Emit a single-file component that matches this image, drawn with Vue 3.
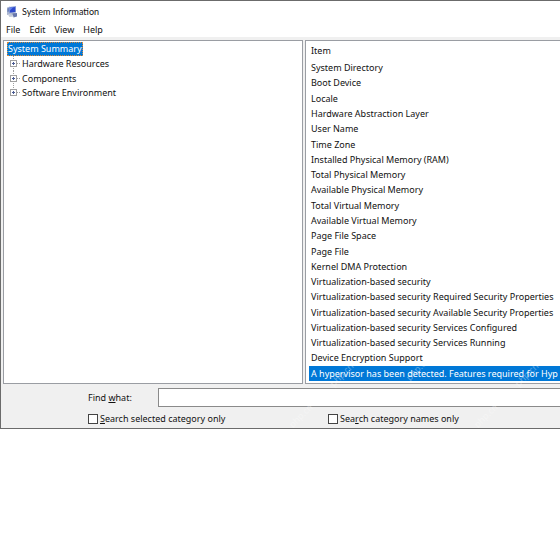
<script setup>
import { ref } from 'vue'

const menus = ['File', 'Edit', 'View', 'Help']
const categories = ['Hardware Resources', 'Components', 'Software Environment']
const items = [
  'System Directory',
  'Boot Device',
  'Locale',
  'Hardware Abstraction Layer',
  'User Name',
  'Time Zone',
  'Installed Physical Memory (RAM)',
  'Total Physical Memory',
  'Available Physical Memory',
  'Total Virtual Memory',
  'Available Virtual Memory',
  'Page File Space',
  'Page File',
  'Kernel DMA Protection',
  'Virtualization-based security',
  'Virtualization-based security Required Security Properties',
  'Virtualization-based security Available Security Properties',
  'Virtualization-based security Services Configured',
  'Virtualization-based security Services Running',
  'Device Encryption Support',
  'A hypervisor has been detected. Features required for Hyp',
]
const selected = ref(items.length - 1)
const query = ref('')
const marks = [
  { left: 326, top: 366 },
  { left: 402, top: 360 },
  { left: 511, top: 366 },
  { left: 285, top: 407 },
  { left: 470, top: 407 },
]
</script>

<template>
  <main class="window">
    <header class="titlebar">
      <svg class="app-icon" viewBox="0 0 12 12" aria-hidden="true">
        <path d="M1 1.5l3-1v8l-3 .5z" fill="#aab6d2" />
        <path d="M1.4 2.4l1.6-.5v3.6l-1.6.4z" fill="#6d82b8" />
        <path d="M3 1l7-1v6.5L3 7.3z" fill="#8fa3d8" />
        <path d="M3.8 1.7l5.4-.8v5L3.8 6.5z" fill="#2f49cc" />
        <path d="M3.8 1.7l3.4-.5-3.4 3.6z" fill="#6484ec" />
        <path d="M3 7.3l6-.6 1.6 2.1-5.6.7z" fill="#a9b3c9" />
        <path d="M6.5 7.4l4.5-.3v3.4l-3.5.9z" fill="#6878ad" />
        <path d="M2 8.6l4-.4 1.4 2.2-4 .5z" fill="#c3cad9" />
      </svg>
      <h1>System Information</h1>
    </header>
    <nav class="menubar">
      <button v-for="m in menus" :key="m" type="button">{{ m }}</button>
    </nav>

    <div class="panes">
      <section class="tree" aria-label="Categories">
        <button class="root" type="button">System Summary</button>
        <ul>
          <li v-for="(c, i) in categories" :key="c">
            <button class="node" type="button">
              <svg viewBox="0 0 13 15" aria-hidden="true">
                <path
                  :d="i === categories.length - 1 ? 'M4.5 0v8M8 7.5h4' : 'M4.5 0v15M8 7.5h4'"
                  stroke="#a0a0a0"
                  stroke-dasharray="1 1"
                  fill="none"
                />
                <rect x="1.5" y="4.5" width="6" height="6" fill="#fff" stroke="#a0a0a0" />
                <path d="M3 7.5h3M4.5 6v3" stroke="#4b5c94" fill="none" />
              </svg>
              <span>{{ c }}</span>
            </button>
          </li>
        </ul>
      </section>

      <section class="details">
        <table>
          <thead>
            <tr><th scope="col">Item</th></tr>
          </thead>
          <tbody>
            <tr v-for="(item, i) in items" :key="item" :class="{ selected: i === selected }" @click="selected = i">
              <td>{{ item }}</td>
            </tr>
          </tbody>
        </table>
      </section>
    </div>

    <form class="search" @submit.prevent>
      <label class="find" for="find">Find <u>w</u>hat:</label>
      <input id="find" v-model="query" class="query" type="text" />
      <div class="options">
        <label><input type="checkbox" /><span><u>S</u>earch selected category only</span></label>
        <label><input type="checkbox" /><span>Sea<u>r</u>ch category names only</span></label>
      </div>
    </form>

    <div class="marks" aria-hidden="true">
      <span v-for="m in marks" :key="m.left" :style="{ left: m.left + 'px', top: m.top + 'px' }">php.cn</span>
    </div>
  </main>
</template>

<style>
body {
  margin: 0;
  background: #fff;
}
</style>

<style scoped>
.window {
  position: relative;
  overflow: hidden;
  box-sizing: border-box;
  border: 1px solid #6b6b6b;
  border-right: 0;
  background: #f0f0f0;
  color: #111;
  font: 9px/15px "Noto Sans", "Open Sans", sans-serif;
}
button {
  margin: 0;
  padding: 0;
  border: 0;
  background: none;
  color: inherit;
  font: inherit;
}
.titlebar {
  display: flex;
  align-items: center;
  gap: 4px;
  height: 21px;
  padding-left: 5px;
  background: #fff;
}
.app-icon {
  width: 12px;
  height: 12px;
}
h1 {
  margin: 0;
  font: 9px/15px Lato, sans-serif;
}
.menubar {
  display: flex;
  gap: 9px;
  height: 15px;
  padding-left: 5px;
  background: #fff;
}
.panes {
  display: grid;
  grid-template-columns: 300px 1fr;
  gap: 2px;
  padding: 3px 0 3px 2px;
}
.tree,
.details {
  border: 1px solid #9a9da3;
  background: #fff;
  min-width: 0;
}
.tree {
  padding: 1px 3px;
}
.root {
  display: block;
  height: 14px;
  padding: 0 1px;
  outline: 1px dotted #d98a3c;
  outline-offset: -1px;
  background: #0078d7;
  color: #fff;
  line-height: 14px;
}
ul {
  display: grid;
  grid-template-rows: repeat(3, 1fr);
  height: 44px;
  margin: 0;
  padding: 0 0 0 2px;
  list-style: none;
}
li {
  min-height: 0;
}
.node {
  display: flex;
  align-items: center;
  height: 100%;
}
.node svg {
  width: 13px;
  height: 15px;
}
.details {
  overflow: hidden;
  padding: 1px 0 2px 3px;
  border-right: 0;
}
table {
  width: 100%;
  height: 339px;
  border-collapse: collapse;
}
th,
td {
  padding: 0 0 0 2px;
  text-align: left;
  font-weight: 400;
  white-space: nowrap;
}
th {
  height: 18px;
  padding-bottom: 2px;
  box-sizing: border-box;
}
.selected {
  background: #0078d7;
  color: #fff;
}
.search {
  display: grid;
  grid-template-columns: 70px 1fr;
  align-items: center;
  row-gap: 4px;
  padding: 1px 0 2px 87px;
}
.query {
  box-sizing: border-box;
  width: 100%;
  min-width: 0;
  height: 19px;
  border: 1px solid #8a8a8a;
  border-right: 0;
  background: #fff;
  font: inherit;
}
.options {
  grid-column: 1 / -1;
  display: grid;
  grid-template-columns: 240px 1fr;
}
.options label {
  display: flex;
  align-items: center;
  gap: 2px;
}
.options input {
  appearance: none;
  box-sizing: border-box;
  width: 10px;
  height: 10px;
  margin: 0;
  border: 1px solid #444;
  background: #fff;
}
.marks span {
  position: absolute;
  color: #fff;
  opacity: 0.35;
  transform: rotate(-45deg);
  pointer-events: none;
}
</style>
